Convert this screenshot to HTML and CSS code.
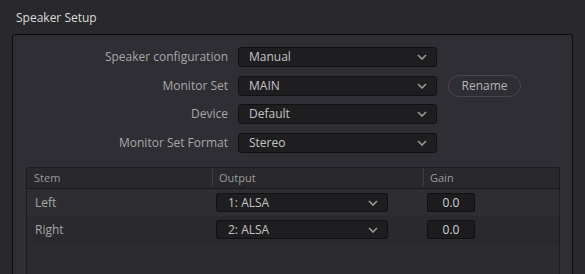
FILE: index.html
```html
<!DOCTYPE html>
<html lang="en">
<head>
  <meta charset="UTF-8">
  <title>Speaker Setup</title>
  <link rel="stylesheet" href="styles.css">
</head>
<body>

  <div class="title">Speaker Setup</div>

  <div class="panel">
    <div class="form">
      <label>Speaker configuration</label>
      <div class="select">Manual <svg class="chev" viewBox="0 0 10 6"><path d="M1 1l4 4 4-4"/></svg></div>
      <span></span>

      <label>Monitor Set</label>
      <div class="select">MAIN <svg class="chev" viewBox="0 0 10 6"><path d="M1 1l4 4 4-4"/></svg></div>
      <button class="rename">Rename</button>

      <label>Device</label>
      <div class="select">Default <svg class="chev" viewBox="0 0 10 6"><path d="M1 1l4 4 4-4"/></svg></div>
      <span></span>

      <label>Monitor Set Format</label>
      <div class="select">Stereo <svg class="chev" viewBox="0 0 10 6"><path d="M1 1l4 4 4-4"/></svg></div>
      <span></span>
    </div>

    <div class="table">
      <div class="thead">
        <div class="th">Stem</div>
        <div class="th">Output</div>
        <div class="th">Gain</div>
      </div>
      <div class="tr">
        <div class="td stem">Left</div>
        <div class="td"><div class="select small">1: ALSA <svg class="chev" viewBox="0 0 10 6"><path d="M1 1l4 4 4-4"/></svg></div></div>
        <div class="td"><div class="gain">0.0</div></div>
      </div>
      <div class="tr alt">
        <div class="td stem">Right</div>
        <div class="td"><div class="select small">2: ALSA <svg class="chev" viewBox="0 0 10 6"><path d="M1 1l4 4 4-4"/></svg></div></div>
        <div class="td"><div class="gain">0.0</div></div>
      </div>
      <div class="empty"></div>
    </div>
  </div>

</body>
</html>
```

FILE: styles.css
```css
body {
  margin: 0;
  background: #28282d;
  font-family: 'Open Sans', 'Noto Sans', Arial, sans-serif;
  font-size: 12px;
  color: #c8c8c8;
  overflow: hidden;
  height: 274px;
}
.title {
  padding: 8px 0 0 16px;
  height: 26px;
  color: #dcdcdc;
  line-height: 20px;
}
.panel {
  margin-left: 12px;
  width: 561px;
  height: 260px;
  background: #2e2e34;
  border: 1px solid #0c0c0e;
  border-radius: 3px;
  padding-top: 12px;
  box-sizing: border-box;
}
.form {
  display: grid;
  grid-template-columns: 215px 199px 73px;
  column-gap: 10px;
  row-gap: 8.7px;
  align-items: center;
}
.form label {
  text-align: right;
  color: #a8a8a8;
  line-height: 20px;
}
.select {
  position: relative;
  height: 20px;
  box-sizing: border-box;
  background: #1e1e21;
  border: 1px solid #111113;
  border-radius: 3px;
  padding-left: 10px;
  line-height: 18px;
  color: #c4c4c4;
}
.chev {
  position: absolute;
  right: 9px;
  top: 6px;
  width: 10px;
  height: 6px;
  fill: none;
  stroke: #9a9a9a;
  stroke-width: 1.6;
}
.rename {
  margin: -1px 0 -1px 1px;
  height: 22px;
  width: 73px;
  background: transparent;
  border: 1px solid #46464c;
  border-radius: 11px;
  color: #b4b4b4;
  font-family: inherit;
  font-size: 12px;
  padding: 0;
}
.table {
  margin: 14px 0 0 13px;
  width: 534px;
  height: 120px;
  border: 1px solid #1d1d21;
  border-radius: 2px;
  background: #2b2b30;
  box-sizing: border-box;
}
.thead, .tr {
  display: grid;
  grid-template-columns: 185px 211px 1fr;
}
.thead {
  height: 21px;
  background: #28282d;
  border-bottom: 1px solid #1a1a1d;
  box-sizing: border-box;
}
.th {
  font-size: 11px;
  color: #9c9c9c;
  line-height: 20px;
  padding-left: 7px;
}
.th + .th {
  border-left: 1px solid #3e3e44;
  margin: 1px 0 2px;
  line-height: 17px;
  padding-left: 6px;
}
.tr {
  height: 27px;
  align-items: center;
  background: #2d2d32;
}
.tr.alt {
  background: #29292e;
}
.td.stem {
  padding-left: 8px;
  color: #a8a8a8;
}
.select.small {
  width: 172px;
  height: 19px;
  margin-left: 4px;
  padding-left: 11px;
  line-height: 17px;
}
.select.small .chev {
  top: 6px;
}
.gain {
  width: 48px;
  height: 19px;
  box-sizing: border-box;
  margin-left: 4px;
  background: #1c1c1f;
  border: 1px solid #111113;
  border-radius: 2px;
  text-align: center;
  line-height: 17px;
  color: #d4d4d4;
}
```
